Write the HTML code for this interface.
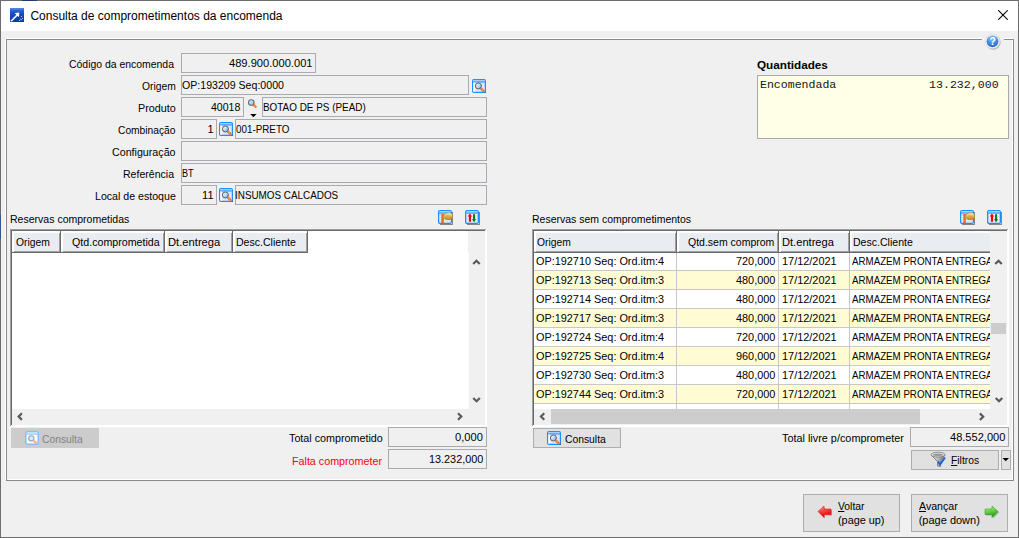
<!DOCTYPE html>
<html><head><meta charset="utf-8"><style>
html,body{margin:0;padding:0;}
body{width:1019px;height:538px;position:relative;overflow:hidden;background:#f0f0f0;font-family:"Liberation Sans",sans-serif;}
body div, body svg{position:absolute;}
.t{white-space:pre;}
u{text-decoration:underline;text-underline-offset:1px;}
</style></head><body>
<div style="left:1px;top:1px;width:1017px;height:30px;background:#ffffff;"></div>
<div style="left:0px;top:0px;width:1019px;height:1px;background:#6d6d6d;"></div>
<div style="left:22px;top:0px;width:15px;height:1px;background:#1f3d6b;"></div>
<div style="left:0px;top:0px;width:1px;height:538px;background:#6d6d6d;"></div>
<div style="left:0px;top:215px;width:1px;height:24px;background:#2c5b8c;"></div>
<div style="left:1018px;top:0px;width:1px;height:538px;background:#6d6d6d;"></div>
<div style="left:0px;top:537px;width:1019px;height:1px;background:#6d6d6d;"></div>
<svg style="left:10px;top:8px;" width="14" height="14" viewBox="0 0 14 14"><defs><linearGradient id="tg" x1="0" y1="0" x2="0" y2="1"><stop offset="0" stop-color="#3b78e0"/><stop offset="0.35" stop-color="#1850c0"/><stop offset="1" stop-color="#0a3a9a"/></linearGradient></defs>
<rect x="0" y="0" width="14" height="14" fill="url(#tg)"/>
<rect x="0" y="0" width="14" height="1.6" fill="#4a82e6"/>
<path d="M1 13.2 L7.6 6.6" stroke="#fff" stroke-width="1.5"/>
<path d="M4.6 4.9 L9.3 4.6 L9 9.3 Z" fill="#fff"/>
<path d="M11 8 L12 9 M10 11 L12 12 M9 12 L10 13 M12 10 L13 11" stroke="#9fc0f0" stroke-width="1"/></svg>
<div class="t" style="left:30.40px;top:10px;font-family:'Liberation Sans';font-size:12px;line-height:12px;font-weight:normal;color:#000;">Consulta de comprometimentos da encomenda</div>
<svg style="left:998px;top:10px;" width="10" height="10" viewBox="0 0 10 10"><path d="M0.3 0.3 L9.7 9.7 M9.7 0.3 L0.3 9.7" stroke="#000" stroke-width="1.05"/></svg>
<div style="left:5px;top:38px;width:1008px;height:1px;background:#ffffff;"></div>
<div style="left:5px;top:38px;width:1px;height:442px;background:#ffffff;"></div>
<div style="left:1012px;top:40px;width:1px;height:440px;background:#ffffff;"></div>
<div style="left:7px;top:479px;width:1006px;height:1px;background:#ffffff;"></div>
<div style="left:6px;top:39px;width:1008px;height:1px;background:#8a8a8a;"></div>
<div style="left:6px;top:39px;width:1px;height:442px;background:#8a8a8a;"></div>
<div style="left:1013px;top:39px;width:1px;height:442px;background:#8a8a8a;"></div>
<div style="left:6px;top:480px;width:1008px;height:1px;background:#8a8a8a;"></div>
<div style="left:982px;top:38px;width:22px;height:4px;background:#f0f0f0;"></div>
<svg style="left:983px;top:32px;" width="19" height="19" viewBox="0 0 19 19"><defs><radialGradient id="hg" cx="0.45" cy="0.25" r="0.85"><stop offset="0" stop-color="#9ccaf6"/><stop offset="0.45" stop-color="#4a94e4"/><stop offset="1" stop-color="#1c5ec4"/></radialGradient></defs>
<circle cx="10.3" cy="10.3" r="7.4" fill="#8a8a8a" opacity="0.55"/>
<circle cx="9.5" cy="9.3" r="7.3" fill="#f4f6fa" stroke="#c8ccd4" stroke-width="0.5"/>
<circle cx="9.5" cy="9.3" r="5.9" fill="url(#hg)"/>
<text x="9.6" y="13" font-family="Liberation Sans" font-weight="bold" font-size="10.5" fill="#fff" text-anchor="middle">?</text></svg>
<div class="t" style="left:69.40px;top:59px;font-family:'Liberation Sans';font-size:11px;line-height:11px;font-weight:normal;color:#000;transform:scaleX(0.9482);transform-origin:0 0;">Código da encomenda</div>
<div class="t" style="left:141.60px;top:81px;font-family:'Liberation Sans';font-size:11px;line-height:11px;font-weight:normal;color:#000;transform:scaleX(0.9360);transform-origin:0 0;">Origem</div>
<div class="t" style="left:137.60px;top:103px;font-family:'Liberation Sans';font-size:11px;line-height:11px;font-weight:normal;color:#000;transform:scaleX(0.9789);transform-origin:0 0;">Produto</div>
<div class="t" style="left:117.90px;top:125px;font-family:'Liberation Sans';font-size:11px;line-height:11px;font-weight:normal;color:#000;transform:scaleX(0.9296);transform-origin:0 0;">Combinação</div>
<div class="t" style="left:111.80px;top:147px;font-family:'Liberation Sans';font-size:11px;line-height:11px;font-weight:normal;color:#000;transform:scaleX(0.9707);transform-origin:0 0;">Configuração</div>
<div class="t" style="left:123.30px;top:169px;font-family:'Liberation Sans';font-size:11px;line-height:11px;font-weight:normal;color:#000;transform:scaleX(0.9597);transform-origin:0 0;">Referência</div>
<div class="t" style="left:94.50px;top:191px;font-family:'Liberation Sans';font-size:11px;line-height:11px;font-weight:normal;color:#000;transform:scaleX(0.9645);transform-origin:0 0;">Local de estoque</div>
<div style="left:181px;top:53px;width:133px;height:18px;border:1px solid #a8aab0;background:#f0f0f0;"></div>
<div class="t" style="left:228.90px;top:58px;font-family:'Liberation Sans';font-size:11px;line-height:11px;font-weight:normal;color:#000;transform:scaleX(1.0114);transform-origin:0 0;">489.900.000.001</div>
<div style="left:181px;top:75px;width:286px;height:18px;border:1px solid #a8aab0;background:#f0f0f0;"></div>
<div class="t" style="left:182.00px;top:80px;font-family:'Liberation Sans';font-size:11px;line-height:11px;font-weight:normal;color:#000;transform:scaleX(0.9632);transform-origin:0 0;">OP:193209 Seq:0000</div>
<svg style="left:472px;top:79px;opacity:1.0" width="14" height="14" viewBox="0 0 14 14"><defs><linearGradient id="mg" x1="0.2" y1="0.1" x2="0.9" y2="0.9"><stop offset="0" stop-color="#f0fbff"/><stop offset="0.55" stop-color="#a8dcf6"/><stop offset="1" stop-color="#5aaee0"/></linearGradient></defs>
<rect x="0.6" y="0.6" width="12.8" height="12.8" rx="1.3" fill="#e8e2f8" stroke="#1890ff" stroke-width="1.2"/>
<rect x="1.2" y="1.4" width="11.6" height="1" fill="#a6cdf7"/>
<rect x="1.2" y="2.4" width="11.6" height="1.1" fill="#1890ff"/>
<rect x="1.3" y="3.5" width="1.6" height="9.2" fill="#faf8ff"/>
<circle cx="6.4" cy="7.0" r="3.0" fill="url(#mg)" stroke="#5c6068" stroke-width="1.0"/>
<path d="M8.7 9.3 L11.9 12.4" stroke="#ff6a1a" stroke-width="2.3"/>
<path d="M9.5 10.1 L11.0 11.5" stroke="#ffd84a" stroke-width="0.8"/>
<rect x="12.6" y="12.6" width="1.4" height="1.4" fill="#303030" opacity="0.7"/></svg>
<div style="left:181px;top:97px;width:61px;height:18px;border:1px solid #a8aab0;background:#f0f0f0;"></div>
<div class="t" style="left:211.10px;top:102px;font-family:'Liberation Sans';font-size:11px;line-height:11px;font-weight:normal;color:#000;transform:scaleX(0.9583);transform-origin:0 0;">40018</div>
<svg style="left:246px;top:97px;" width="14" height="22" viewBox="0 0 14 22"><defs><linearGradient id="mg2" x1="0" y1="0" x2="1" y2="1"><stop offset="0" stop-color="#eafaff"/><stop offset="1" stop-color="#70bce8"/></linearGradient></defs>
<circle cx="5.3" cy="5.5" r="2.8" fill="url(#mg2)" stroke="#686c72" stroke-width="1.1"/>
<path d="M7.4 7.6 L10.3 10.5" stroke="#ff6a1a" stroke-width="2.2"/>
<path d="M8.2 8.4 L9.5 9.7" stroke="#ffd040" stroke-width="0.8"/>
<path d="M4.2 17 H10.6 L7.4 20.2 Z" fill="#000"/></svg>
<div style="left:262px;top:97px;width:223px;height:18px;border:1px solid #a8aab0;background:#f0f0f0;"></div>
<div class="t" style="left:262.80px;top:102px;font-family:'Liberation Sans';font-size:11px;line-height:11px;font-weight:normal;color:#000;transform:scaleX(0.9001);transform-origin:0 0;">BOTAO DE PS (PEAD)</div>
<div style="left:181px;top:119px;width:34px;height:18px;border:1px solid #a8aab0;background:#f0f0f0;"></div>
<div class="t" style="left:207.40px;top:124px;font-family:'Liberation Sans';font-size:11px;line-height:11px;font-weight:normal;color:#000;">1</div>
<svg style="left:219px;top:122px;opacity:1.0" width="14" height="14" viewBox="0 0 14 14"><defs><linearGradient id="mg" x1="0.2" y1="0.1" x2="0.9" y2="0.9"><stop offset="0" stop-color="#f0fbff"/><stop offset="0.55" stop-color="#a8dcf6"/><stop offset="1" stop-color="#5aaee0"/></linearGradient></defs>
<rect x="0.6" y="0.6" width="12.8" height="12.8" rx="1.3" fill="#e8e2f8" stroke="#1890ff" stroke-width="1.2"/>
<rect x="1.2" y="1.4" width="11.6" height="1" fill="#a6cdf7"/>
<rect x="1.2" y="2.4" width="11.6" height="1.1" fill="#1890ff"/>
<rect x="1.3" y="3.5" width="1.6" height="9.2" fill="#faf8ff"/>
<circle cx="6.4" cy="7.0" r="3.0" fill="url(#mg)" stroke="#5c6068" stroke-width="1.0"/>
<path d="M8.7 9.3 L11.9 12.4" stroke="#ff6a1a" stroke-width="2.3"/>
<path d="M9.5 10.1 L11.0 11.5" stroke="#ffd84a" stroke-width="0.8"/>
<rect x="12.6" y="12.6" width="1.4" height="1.4" fill="#303030" opacity="0.7"/></svg>
<div style="left:235px;top:119px;width:250px;height:18px;border:1px solid #a8aab0;background:#f0f0f0;"></div>
<div class="t" style="left:236.10px;top:124px;font-family:'Liberation Sans';font-size:11px;line-height:11px;font-weight:normal;color:#000;transform:scaleX(0.8944);transform-origin:0 0;">001-PRETO</div>
<div style="left:181px;top:141px;width:304px;height:18px;border:1px solid #a8aab0;background:#f0f0f0;"></div>
<div style="left:181px;top:163px;width:304px;height:18px;border:1px solid #a8aab0;background:#f0f0f0;"></div>
<div class="t" style="left:181.50px;top:168px;font-family:'Liberation Sans';font-size:11px;line-height:11px;font-weight:normal;color:#000;transform:scaleX(0.8300);transform-origin:0 0;">BT</div>
<div style="left:181px;top:185px;width:34px;height:18px;border:1px solid #a8aab0;background:#f0f0f0;"></div>
<div class="t" style="left:202.10px;top:190px;font-family:'Liberation Sans';font-size:11px;line-height:11px;font-weight:normal;color:#000;">11</div>
<svg style="left:219px;top:188px;opacity:1.0" width="14" height="14" viewBox="0 0 14 14"><defs><linearGradient id="mg" x1="0.2" y1="0.1" x2="0.9" y2="0.9"><stop offset="0" stop-color="#f0fbff"/><stop offset="0.55" stop-color="#a8dcf6"/><stop offset="1" stop-color="#5aaee0"/></linearGradient></defs>
<rect x="0.6" y="0.6" width="12.8" height="12.8" rx="1.3" fill="#e8e2f8" stroke="#1890ff" stroke-width="1.2"/>
<rect x="1.2" y="1.4" width="11.6" height="1" fill="#a6cdf7"/>
<rect x="1.2" y="2.4" width="11.6" height="1.1" fill="#1890ff"/>
<rect x="1.3" y="3.5" width="1.6" height="9.2" fill="#faf8ff"/>
<circle cx="6.4" cy="7.0" r="3.0" fill="url(#mg)" stroke="#5c6068" stroke-width="1.0"/>
<path d="M8.7 9.3 L11.9 12.4" stroke="#ff6a1a" stroke-width="2.3"/>
<path d="M9.5 10.1 L11.0 11.5" stroke="#ffd84a" stroke-width="0.8"/>
<rect x="12.6" y="12.6" width="1.4" height="1.4" fill="#303030" opacity="0.7"/></svg>
<div style="left:235px;top:185px;width:250px;height:18px;border:1px solid #a8aab0;background:#f0f0f0;"></div>
<div class="t" style="left:235.10px;top:190px;font-family:'Liberation Sans';font-size:11px;line-height:11px;font-weight:normal;color:#000;transform:scaleX(0.8981);transform-origin:0 0;">INSUMOS CALCADOS</div>
<div class="t" style="left:757.00px;top:60px;font-family:'Liberation Sans';font-size:11px;line-height:11px;font-weight:bold;color:#000;transform:scaleX(1.0631);transform-origin:0 0;">Quantidades</div>
<div style="left:757px;top:75px;width:250px;height:62px;border:1px solid #a8aab0;background:#fffee6;"></div>
<div class="t" style="left:759.70px;top:80px;font-family:'Liberation Mono';font-size:11px;line-height:11px;font-weight:normal;color:#141414;transform:scaleX(1.0505);transform-origin:0 0;">Encomendada</div>
<div class="t" style="left:928.50px;top:80px;font-family:'Liberation Mono';font-size:11px;line-height:11px;font-weight:normal;color:#141414;transform:scaleX(1.0549);transform-origin:0 0;">13.232,000</div>
<svg style="left:438px;top:210px;" width="15" height="15" viewBox="0 0 15 15"><path d="M14.5 2 V14.5 H2" fill="none" stroke="#000" stroke-width="1" opacity="0.45"/>
<rect x="0.65" y="0.65" width="12.7" height="12.7" rx="1.3" fill="#ebe8f8" stroke="#1890ff" stroke-width="1.3"/>
<rect x="1.3" y="1.5" width="11.4" height="1" fill="#a6cdf7"/>
<rect x="1.3" y="2.5" width="11.4" height="1.1" fill="#1890ff"/><defs><linearGradient id="hand" x1="0" y1="0" x2="0" y2="1"><stop offset="0" stop-color="#fff4c0"/><stop offset="0.5" stop-color="#e8b850"/><stop offset="1" stop-color="#b88420"/></linearGradient></defs>
<path d="M1.5 6.3 H12.5 M1.5 8.6 H12.5 M1.5 10.9 H12.5" stroke="#ffffff" stroke-width="0.9"/>
<path d="M1.5 5.2 H12.5 M1.5 7.5 H12.5 M1.5 9.8 H12.5 M1.5 12 H12.5" stroke="#c8c4ec" stroke-width="0.9"/>
<rect x="3.2" y="4" width="2.6" height="9" fill="#f5642a"/>
<path d="M3.6 4.5 V12.5" stroke="#ffc8a0" stroke-width="0.6" stroke-dasharray="1 1"/>
<path d="M5.2 6.2 C6.3 4.2 8.2 3 10.3 2.8 C12 2.7 13.6 3.2 14.4 4.2 L14.6 7.4 C13.6 9 11.6 9.8 9.6 9.6 C8.2 9.5 7 9 6.3 8.3 L4.3 7.6 Z" fill="url(#hand)" stroke="#a87a28" stroke-width="0.6"/>
<path d="M7.5 6.2 C9 5.6 11 5.8 12.5 6.6" fill="none" stroke="#b08030" stroke-width="0.5"/></svg>
<svg style="left:465px;top:210px;" width="15" height="15" viewBox="0 0 15 15"><path d="M14.5 2 V14.5 H2" fill="none" stroke="#000" stroke-width="1" opacity="0.45"/>
<rect x="0.65" y="0.65" width="12.7" height="12.7" rx="1.3" fill="#ebe8f8" stroke="#1890ff" stroke-width="1.3"/>
<rect x="1.3" y="1.5" width="11.4" height="1" fill="#a6cdf7"/>
<rect x="1.3" y="2.5" width="11.4" height="1.1" fill="#1890ff"/><path d="M2.7 6.5 L4.9 3.5 L7.1 6.5 H6 V11.8 H3.9 V6.5 Z" fill="#f40000"/>
<path d="M6.9 9.3 L9.05 12.3 L11.2 9.3 H10.1 V4.2 H8 V9.3 Z" fill="#0a7d16"/></svg>
<svg style="left:960px;top:210px;" width="15" height="15" viewBox="0 0 15 15"><path d="M14.5 2 V14.5 H2" fill="none" stroke="#000" stroke-width="1" opacity="0.45"/>
<rect x="0.65" y="0.65" width="12.7" height="12.7" rx="1.3" fill="#ebe8f8" stroke="#1890ff" stroke-width="1.3"/>
<rect x="1.3" y="1.5" width="11.4" height="1" fill="#a6cdf7"/>
<rect x="1.3" y="2.5" width="11.4" height="1.1" fill="#1890ff"/><defs><linearGradient id="hand" x1="0" y1="0" x2="0" y2="1"><stop offset="0" stop-color="#fff4c0"/><stop offset="0.5" stop-color="#e8b850"/><stop offset="1" stop-color="#b88420"/></linearGradient></defs>
<path d="M1.5 6.3 H12.5 M1.5 8.6 H12.5 M1.5 10.9 H12.5" stroke="#ffffff" stroke-width="0.9"/>
<path d="M1.5 5.2 H12.5 M1.5 7.5 H12.5 M1.5 9.8 H12.5 M1.5 12 H12.5" stroke="#c8c4ec" stroke-width="0.9"/>
<rect x="3.2" y="4" width="2.6" height="9" fill="#f5642a"/>
<path d="M3.6 4.5 V12.5" stroke="#ffc8a0" stroke-width="0.6" stroke-dasharray="1 1"/>
<path d="M5.2 6.2 C6.3 4.2 8.2 3 10.3 2.8 C12 2.7 13.6 3.2 14.4 4.2 L14.6 7.4 C13.6 9 11.6 9.8 9.6 9.6 C8.2 9.5 7 9 6.3 8.3 L4.3 7.6 Z" fill="url(#hand)" stroke="#a87a28" stroke-width="0.6"/>
<path d="M7.5 6.2 C9 5.6 11 5.8 12.5 6.6" fill="none" stroke="#b08030" stroke-width="0.5"/></svg>
<svg style="left:987px;top:210px;" width="15" height="15" viewBox="0 0 15 15"><path d="M14.5 2 V14.5 H2" fill="none" stroke="#000" stroke-width="1" opacity="0.45"/>
<rect x="0.65" y="0.65" width="12.7" height="12.7" rx="1.3" fill="#ebe8f8" stroke="#1890ff" stroke-width="1.3"/>
<rect x="1.3" y="1.5" width="11.4" height="1" fill="#a6cdf7"/>
<rect x="1.3" y="2.5" width="11.4" height="1.1" fill="#1890ff"/><path d="M2.7 6.5 L4.9 3.5 L7.1 6.5 H6 V11.8 H3.9 V6.5 Z" fill="#f40000"/>
<path d="M6.9 9.3 L9.05 12.3 L11.2 9.3 H10.1 V4.2 H8 V9.3 Z" fill="#0a7d16"/></svg>
<div class="t" style="left:9.70px;top:214px;font-family:'Liberation Sans';font-size:11px;line-height:11px;font-weight:normal;color:#000;transform:scaleX(0.9568);transform-origin:0 0;">Reservas comprometidas</div>
<div class="t" style="left:531.50px;top:214px;font-family:'Liberation Sans';font-size:11px;line-height:11px;font-weight:normal;color:#000;transform:scaleX(0.9529);transform-origin:0 0;">Reservas sem comprometimentos</div>
<div style="left:10px;top:229px;width:477px;height:198px;background:#ffffff;"></div>
<div style="left:10px;top:229px;width:476px;height:1px;background:#a0a0a0;"></div>
<div style="left:10px;top:229px;width:1px;height:197px;background:#a0a0a0;"></div>
<div style="left:11px;top:230px;width:474px;height:1px;background:#696969;"></div>
<div style="left:11px;top:230px;width:1px;height:195px;background:#696969;"></div>
<div style="left:12px;top:231px;width:49px;height:22px;background:#e9ecf0;"></div>
<div style="left:12px;top:231px;width:48px;height:2px;background:#ffffff;"></div>
<div style="left:12px;top:231px;width:2px;height:20px;background:#ffffff;"></div>
<div style="left:59px;top:233px;width:1px;height:19px;background:#a0a0a0;"></div>
<div style="left:14px;top:251px;width:46px;height:1px;background:#a0a0a0;"></div>
<div style="left:60px;top:231px;width:1px;height:22px;background:#696969;"></div>
<div style="left:12px;top:252px;width:49px;height:1px;background:#696969;"></div>
<div style="left:61px;top:231px;width:104px;height:22px;background:#e9ecf0;"></div>
<div style="left:61px;top:231px;width:103px;height:2px;background:#ffffff;"></div>
<div style="left:61px;top:231px;width:2px;height:20px;background:#ffffff;"></div>
<div style="left:163px;top:233px;width:1px;height:19px;background:#a0a0a0;"></div>
<div style="left:63px;top:251px;width:101px;height:1px;background:#a0a0a0;"></div>
<div style="left:164px;top:231px;width:1px;height:22px;background:#696969;"></div>
<div style="left:61px;top:252px;width:104px;height:1px;background:#696969;"></div>
<div style="left:165px;top:231px;width:68px;height:22px;background:#e9ecf0;"></div>
<div style="left:165px;top:231px;width:67px;height:2px;background:#ffffff;"></div>
<div style="left:165px;top:231px;width:2px;height:20px;background:#ffffff;"></div>
<div style="left:231px;top:233px;width:1px;height:19px;background:#a0a0a0;"></div>
<div style="left:167px;top:251px;width:65px;height:1px;background:#a0a0a0;"></div>
<div style="left:232px;top:231px;width:1px;height:22px;background:#696969;"></div>
<div style="left:165px;top:252px;width:68px;height:1px;background:#696969;"></div>
<div style="left:233px;top:231px;width:75px;height:22px;background:#e9ecf0;"></div>
<div style="left:233px;top:231px;width:74px;height:2px;background:#ffffff;"></div>
<div style="left:233px;top:231px;width:2px;height:20px;background:#ffffff;"></div>
<div style="left:306px;top:233px;width:1px;height:19px;background:#a0a0a0;"></div>
<div style="left:235px;top:251px;width:72px;height:1px;background:#a0a0a0;"></div>
<div style="left:307px;top:231px;width:1px;height:22px;background:#696969;"></div>
<div style="left:233px;top:252px;width:75px;height:1px;background:#696969;"></div>
<div class="t" style="left:15.50px;top:237px;font-family:'Liberation Sans';font-size:11px;line-height:11px;font-weight:normal;color:#000;transform:scaleX(0.9388);transform-origin:0 0;">Origem</div>
<div class="t" style="left:71.50px;top:237px;font-family:'Liberation Sans';font-size:11px;line-height:11px;font-weight:normal;color:#000;transform:scaleX(0.9687);transform-origin:0 0;">Qtd.comprometida</div>
<div class="t" style="left:168.30px;top:237px;font-family:'Liberation Sans';font-size:11px;line-height:11px;font-weight:normal;color:#000;transform:scaleX(1.0183);transform-origin:0 0;">Dt.entrega</div>
<div class="t" style="left:236.30px;top:237px;font-family:'Liberation Sans';font-size:11px;line-height:11px;font-weight:normal;color:#000;transform:scaleX(0.9592);transform-origin:0 0;">Desc.Cliente</div>
<div style="left:468px;top:231px;width:17px;height:194px;background:#f0f0f0;"></div>
<div style="left:468px;top:253px;width:1px;height:156px;background:#ffffff;"></div>
<div style="left:12px;top:409px;width:456px;height:16px;background:#f0f0f0;"></div>
<svg style="left:470px;top:256px;" width="12" height="12" viewBox="0 0 12 12"><path transform="translate(6.45 6.00)" d="M-3.3 2 L0 -1.3 L3.3 2" fill="none" stroke="#5a5a5a" stroke-width="2.2"/></svg>
<svg style="left:470px;top:394px;" width="12" height="12" viewBox="0 0 12 12"><path transform="translate(6.55 6.00)" d="M-3.3 -2 L0 1.3 L3.3 -2" fill="none" stroke="#5a5a5a" stroke-width="2.2"/></svg>
<svg style="left:13px;top:410px;" width="12" height="12" viewBox="0 0 12 12"><path transform="translate(6.90 6.60)" d="M2 -3.3 L-1.3 0 L2 3.3" fill="none" stroke="#5a5a5a" stroke-width="2.2"/></svg>
<svg style="left:454px;top:410px;" width="12" height="12" viewBox="0 0 12 12"><path transform="translate(6.00 6.50)" d="M-2 -3.3 L1.3 0 L-2 3.3" fill="none" stroke="#5a5a5a" stroke-width="2.2"/></svg>
<div style="left:532px;top:229px;width:477px;height:198px;background:#ffffff;"></div>
<div style="left:532px;top:229px;width:476px;height:1px;background:#a0a0a0;"></div>
<div style="left:532px;top:229px;width:1px;height:197px;background:#a0a0a0;"></div>
<div style="left:533px;top:230px;width:474px;height:1px;background:#696969;"></div>
<div style="left:533px;top:230px;width:1px;height:195px;background:#696969;"></div>
<div style="left:534px;top:231px;width:143px;height:22px;background:#e9ecf0;"></div>
<div style="left:534px;top:231px;width:142px;height:2px;background:#ffffff;"></div>
<div style="left:534px;top:231px;width:2px;height:20px;background:#ffffff;"></div>
<div style="left:675px;top:233px;width:1px;height:19px;background:#a0a0a0;"></div>
<div style="left:536px;top:251px;width:140px;height:1px;background:#a0a0a0;"></div>
<div style="left:676px;top:231px;width:1px;height:22px;background:#696969;"></div>
<div style="left:534px;top:252px;width:143px;height:1px;background:#696969;"></div>
<div style="left:677px;top:231px;width:102px;height:22px;background:#e9ecf0;"></div>
<div style="left:677px;top:231px;width:101px;height:2px;background:#ffffff;"></div>
<div style="left:677px;top:231px;width:2px;height:20px;background:#ffffff;"></div>
<div style="left:777px;top:233px;width:1px;height:19px;background:#a0a0a0;"></div>
<div style="left:679px;top:251px;width:99px;height:1px;background:#a0a0a0;"></div>
<div style="left:778px;top:231px;width:1px;height:22px;background:#696969;"></div>
<div style="left:677px;top:252px;width:102px;height:1px;background:#696969;"></div>
<div style="left:779px;top:231px;width:71px;height:22px;background:#e9ecf0;"></div>
<div style="left:779px;top:231px;width:70px;height:2px;background:#ffffff;"></div>
<div style="left:779px;top:231px;width:2px;height:20px;background:#ffffff;"></div>
<div style="left:848px;top:233px;width:1px;height:19px;background:#a0a0a0;"></div>
<div style="left:781px;top:251px;width:68px;height:1px;background:#a0a0a0;"></div>
<div style="left:849px;top:231px;width:1px;height:22px;background:#696969;"></div>
<div style="left:779px;top:252px;width:71px;height:1px;background:#696969;"></div>
<div style="left:850px;top:231px;width:140px;height:22px;background:#e9ecf0;"></div>
<div style="left:850px;top:231px;width:140px;height:2px;background:#ffffff;"></div>
<div style="left:850px;top:231px;width:2px;height:20px;background:#ffffff;"></div>
<div style="left:850px;top:251px;width:140px;height:1px;background:#a0a0a0;"></div>
<div style="left:850px;top:252px;width:140px;height:1px;background:#696969;"></div>
<div class="t" style="left:537.40px;top:237px;font-family:'Liberation Sans';font-size:11px;line-height:11px;font-weight:normal;color:#000;transform:scaleX(0.9360);transform-origin:0 0;">Origem</div>
<div class="t" style="left:687.60px;top:237px;font-family:'Liberation Sans';font-size:11px;line-height:11px;font-weight:normal;color:#000;transform:scaleX(0.9546);transform-origin:0 0;">Qtd.sem comprom</div>
<div class="t" style="left:782.00px;top:237px;font-family:'Liberation Sans';font-size:11px;line-height:11px;font-weight:normal;color:#000;transform:scaleX(1.0106);transform-origin:0 0;">Dt.entrega</div>
<div class="t" style="left:853.00px;top:237px;font-family:'Liberation Sans';font-size:11px;line-height:11px;font-weight:normal;color:#000;transform:scaleX(0.9592);transform-origin:0 0;">Desc.Cliente</div>
<div style="left:534px;top:270px;width:456px;height:1px;background:#c8c8c8;"></div>
<div class="t" style="left:536.00px;top:256px;font-family:'Liberation Sans';font-size:11px;line-height:11px;font-weight:normal;color:#000;transform:scaleX(0.9884);transform-origin:0 0;">OP:192710 Seq: Ord.itm:4</div>
<div class="t" style="left:736.00px;top:256px;font-family:'Liberation Sans';font-size:11px;line-height:11px;font-weight:normal;color:#000;transform:scaleX(0.9888);transform-origin:0 0;">720,000</div>
<div class="t" style="left:782.00px;top:256px;font-family:'Liberation Sans';font-size:11px;line-height:11px;font-weight:normal;color:#000;transform:scaleX(0.9921);transform-origin:0 0;">17/12/2021</div>
<div style="left:850px;top:252px;width:140px;height:18px;overflow:hidden"><div style="left:-850px;top:-252px"><div class="t" style="left:852.00px;top:256px;font-family:'Liberation Sans';font-size:11px;line-height:11px;font-weight:normal;color:#000;transform:scaleX(0.8850);transform-origin:0 0;">ARMAZEM PRONTA ENTREGA</div></div></div>
<div style="left:534px;top:271px;width:456px;height:18px;background:#fffcd4;"></div>
<div style="left:534px;top:289px;width:456px;height:1px;background:#c8c8c8;"></div>
<div class="t" style="left:536.00px;top:275px;font-family:'Liberation Sans';font-size:11px;line-height:11px;font-weight:normal;color:#000;transform:scaleX(0.9884);transform-origin:0 0;">OP:192713 Seq: Ord.itm:3</div>
<div class="t" style="left:736.00px;top:275px;font-family:'Liberation Sans';font-size:11px;line-height:11px;font-weight:normal;color:#000;transform:scaleX(0.9888);transform-origin:0 0;">480,000</div>
<div class="t" style="left:782.00px;top:275px;font-family:'Liberation Sans';font-size:11px;line-height:11px;font-weight:normal;color:#000;transform:scaleX(0.9921);transform-origin:0 0;">17/12/2021</div>
<div style="left:850px;top:271px;width:140px;height:18px;overflow:hidden"><div style="left:-850px;top:-271px"><div class="t" style="left:852.00px;top:275px;font-family:'Liberation Sans';font-size:11px;line-height:11px;font-weight:normal;color:#000;transform:scaleX(0.8850);transform-origin:0 0;">ARMAZEM PRONTA ENTREGA</div></div></div>
<div style="left:534px;top:308px;width:456px;height:1px;background:#c8c8c8;"></div>
<div class="t" style="left:536.00px;top:294px;font-family:'Liberation Sans';font-size:11px;line-height:11px;font-weight:normal;color:#000;transform:scaleX(0.9884);transform-origin:0 0;">OP:192714 Seq: Ord.itm:3</div>
<div class="t" style="left:736.00px;top:294px;font-family:'Liberation Sans';font-size:11px;line-height:11px;font-weight:normal;color:#000;transform:scaleX(0.9888);transform-origin:0 0;">480,000</div>
<div class="t" style="left:782.00px;top:294px;font-family:'Liberation Sans';font-size:11px;line-height:11px;font-weight:normal;color:#000;transform:scaleX(0.9921);transform-origin:0 0;">17/12/2021</div>
<div style="left:850px;top:290px;width:140px;height:18px;overflow:hidden"><div style="left:-850px;top:-290px"><div class="t" style="left:852.00px;top:294px;font-family:'Liberation Sans';font-size:11px;line-height:11px;font-weight:normal;color:#000;transform:scaleX(0.8850);transform-origin:0 0;">ARMAZEM PRONTA ENTREGA</div></div></div>
<div style="left:534px;top:309px;width:456px;height:18px;background:#fffcd4;"></div>
<div style="left:534px;top:327px;width:456px;height:1px;background:#c8c8c8;"></div>
<div class="t" style="left:536.00px;top:313px;font-family:'Liberation Sans';font-size:11px;line-height:11px;font-weight:normal;color:#000;transform:scaleX(0.9884);transform-origin:0 0;">OP:192717 Seq: Ord.itm:3</div>
<div class="t" style="left:736.00px;top:313px;font-family:'Liberation Sans';font-size:11px;line-height:11px;font-weight:normal;color:#000;transform:scaleX(0.9888);transform-origin:0 0;">480,000</div>
<div class="t" style="left:782.00px;top:313px;font-family:'Liberation Sans';font-size:11px;line-height:11px;font-weight:normal;color:#000;transform:scaleX(0.9921);transform-origin:0 0;">17/12/2021</div>
<div style="left:850px;top:309px;width:140px;height:18px;overflow:hidden"><div style="left:-850px;top:-309px"><div class="t" style="left:852.00px;top:313px;font-family:'Liberation Sans';font-size:11px;line-height:11px;font-weight:normal;color:#000;transform:scaleX(0.8850);transform-origin:0 0;">ARMAZEM PRONTA ENTREGA</div></div></div>
<div style="left:534px;top:346px;width:456px;height:1px;background:#c8c8c8;"></div>
<div class="t" style="left:536.00px;top:332px;font-family:'Liberation Sans';font-size:11px;line-height:11px;font-weight:normal;color:#000;transform:scaleX(0.9884);transform-origin:0 0;">OP:192724 Seq: Ord.itm:4</div>
<div class="t" style="left:736.00px;top:332px;font-family:'Liberation Sans';font-size:11px;line-height:11px;font-weight:normal;color:#000;transform:scaleX(0.9888);transform-origin:0 0;">720,000</div>
<div class="t" style="left:782.00px;top:332px;font-family:'Liberation Sans';font-size:11px;line-height:11px;font-weight:normal;color:#000;transform:scaleX(0.9921);transform-origin:0 0;">17/12/2021</div>
<div style="left:850px;top:328px;width:140px;height:18px;overflow:hidden"><div style="left:-850px;top:-328px"><div class="t" style="left:852.00px;top:332px;font-family:'Liberation Sans';font-size:11px;line-height:11px;font-weight:normal;color:#000;transform:scaleX(0.8850);transform-origin:0 0;">ARMAZEM PRONTA ENTREGA</div></div></div>
<div style="left:534px;top:347px;width:456px;height:18px;background:#fffcd4;"></div>
<div style="left:534px;top:365px;width:456px;height:1px;background:#c8c8c8;"></div>
<div class="t" style="left:536.00px;top:351px;font-family:'Liberation Sans';font-size:11px;line-height:11px;font-weight:normal;color:#000;transform:scaleX(0.9884);transform-origin:0 0;">OP:192725 Seq: Ord.itm:4</div>
<div class="t" style="left:736.00px;top:351px;font-family:'Liberation Sans';font-size:11px;line-height:11px;font-weight:normal;color:#000;transform:scaleX(0.9888);transform-origin:0 0;">960,000</div>
<div class="t" style="left:782.00px;top:351px;font-family:'Liberation Sans';font-size:11px;line-height:11px;font-weight:normal;color:#000;transform:scaleX(0.9921);transform-origin:0 0;">17/12/2021</div>
<div style="left:850px;top:347px;width:140px;height:18px;overflow:hidden"><div style="left:-850px;top:-347px"><div class="t" style="left:852.00px;top:351px;font-family:'Liberation Sans';font-size:11px;line-height:11px;font-weight:normal;color:#000;transform:scaleX(0.8850);transform-origin:0 0;">ARMAZEM PRONTA ENTREGA</div></div></div>
<div style="left:534px;top:384px;width:456px;height:1px;background:#c8c8c8;"></div>
<div class="t" style="left:536.00px;top:370px;font-family:'Liberation Sans';font-size:11px;line-height:11px;font-weight:normal;color:#000;transform:scaleX(0.9884);transform-origin:0 0;">OP:192730 Seq: Ord.itm:3</div>
<div class="t" style="left:736.00px;top:370px;font-family:'Liberation Sans';font-size:11px;line-height:11px;font-weight:normal;color:#000;transform:scaleX(0.9888);transform-origin:0 0;">480,000</div>
<div class="t" style="left:782.00px;top:370px;font-family:'Liberation Sans';font-size:11px;line-height:11px;font-weight:normal;color:#000;transform:scaleX(0.9921);transform-origin:0 0;">17/12/2021</div>
<div style="left:850px;top:366px;width:140px;height:18px;overflow:hidden"><div style="left:-850px;top:-366px"><div class="t" style="left:852.00px;top:370px;font-family:'Liberation Sans';font-size:11px;line-height:11px;font-weight:normal;color:#000;transform:scaleX(0.8850);transform-origin:0 0;">ARMAZEM PRONTA ENTREGA</div></div></div>
<div style="left:534px;top:385px;width:456px;height:18px;background:#fffcd4;"></div>
<div style="left:534px;top:403px;width:456px;height:1px;background:#c8c8c8;"></div>
<div class="t" style="left:536.00px;top:389px;font-family:'Liberation Sans';font-size:11px;line-height:11px;font-weight:normal;color:#000;transform:scaleX(0.9884);transform-origin:0 0;">OP:192744 Seq: Ord.itm:3</div>
<div class="t" style="left:736.00px;top:389px;font-family:'Liberation Sans';font-size:11px;line-height:11px;font-weight:normal;color:#000;transform:scaleX(0.9888);transform-origin:0 0;">720,000</div>
<div class="t" style="left:782.00px;top:389px;font-family:'Liberation Sans';font-size:11px;line-height:11px;font-weight:normal;color:#000;transform:scaleX(0.9921);transform-origin:0 0;">17/12/2021</div>
<div style="left:850px;top:385px;width:140px;height:18px;overflow:hidden"><div style="left:-850px;top:-385px"><div class="t" style="left:852.00px;top:389px;font-family:'Liberation Sans';font-size:11px;line-height:11px;font-weight:normal;color:#000;transform:scaleX(0.8850);transform-origin:0 0;">ARMAZEM PRONTA ENTREGA</div></div></div>
<div style="left:676px;top:253px;width:1px;height:156px;background:#c8c8c8;"></div>
<div style="left:778px;top:253px;width:1px;height:156px;background:#c8c8c8;"></div>
<div style="left:849px;top:253px;width:1px;height:156px;background:#c8c8c8;"></div>
<div style="left:990px;top:231px;width:17px;height:194px;background:#f0f0f0;"></div>
<div style="left:991px;top:323px;width:15px;height:11px;background:#cdcdcd;"></div>
<div style="left:534px;top:409px;width:456px;height:16px;background:#f0f0f0;"></div>
<div style="left:551px;top:409px;width:369px;height:15px;background:#cdcdcd;"></div>
<svg style="left:992px;top:256px;" width="12" height="12" viewBox="0 0 12 12"><path transform="translate(6.50 6.00)" d="M-3.3 2 L0 -1.3 L3.3 2" fill="none" stroke="#5a5a5a" stroke-width="2.2"/></svg>
<svg style="left:993px;top:394px;" width="12" height="12" viewBox="0 0 12 12"><path transform="translate(6.00 6.00)" d="M-3.3 -2 L0 1.3 L3.3 -2" fill="none" stroke="#5a5a5a" stroke-width="2.2"/></svg>
<svg style="left:536px;top:410px;" width="12" height="12" viewBox="0 0 12 12"><path transform="translate(6.25 6.50)" d="M2 -3.3 L-1.3 0 L2 3.3" fill="none" stroke="#5a5a5a" stroke-width="2.2"/></svg>
<svg style="left:975px;top:410px;" width="12" height="12" viewBox="0 0 12 12"><path transform="translate(6.90 6.70)" d="M-2 -3.3 L1.3 0 L-2 3.3" fill="none" stroke="#5a5a5a" stroke-width="2.2"/></svg>
<div style="left:11px;top:428px;width:88px;height:20px;background:#cccccc;"></div>
<svg style="left:25px;top:431px;" width="14" height="14" viewBox="0 0 14 14"><rect x="0.75" y="0.75" width="12.5" height="12.5" rx="1.6" fill="#fbfbff" stroke="#7cc0ff" stroke-width="1.5"/>
<rect x="1.4" y="1.6" width="11.2" height="1" fill="#d4e6fb"/><rect x="1.4" y="2.6" width="11.2" height="1" fill="#7cc0ff"/>
<circle cx="6.3" cy="7.3" r="2.6" fill="#d6eefa" stroke="#a0a4aa" stroke-width="1.1"/>
<path d="M8.6 9.6 L11.6 12.4" stroke="#ffb27a" stroke-width="2.2"/></svg>
<div class="t" style="left:42.30px;top:434px;font-family:'Liberation Sans';font-size:11px;line-height:11px;font-weight:normal;color:#838383;transform:scaleX(0.9369);transform-origin:0 0;">Consulta</div>
<div class="t" style="left:288.50px;top:433px;font-family:'Liberation Sans';font-size:11px;line-height:11px;font-weight:normal;color:#000;transform:scaleX(0.9774);transform-origin:0 0;">Total comprometido</div>
<div class="t" style="left:291.90px;top:456px;font-family:'Liberation Sans';font-size:11px;line-height:11px;font-weight:normal;color:#ff0000;transform:scaleX(0.9747);transform-origin:0 0;">Falta comprometer</div>
<div style="left:388px;top:427px;width:97px;height:18px;border:1px solid #a8aab0;background:#f0f0f0;"></div>
<div class="t" style="left:455.40px;top:432px;font-family:'Liberation Sans';font-size:11px;line-height:11px;font-weight:normal;color:#000;transform:scaleX(1.0106);transform-origin:0 0;">0,000</div>
<div style="left:388px;top:449px;width:97px;height:18px;border:1px solid #a8aab0;background:#f0f0f0;"></div>
<div class="t" style="left:428.90px;top:454px;font-family:'Liberation Sans';font-size:11px;line-height:11px;font-weight:normal;color:#000;transform:scaleX(0.9866);transform-origin:0 0;">13.232,000</div>
<div style="left:533px;top:428px;width:86px;height:18px;border:1px solid #adadad;background:#e1e1e1;"></div>
<svg style="left:547px;top:431px;opacity:1.0" width="14" height="14" viewBox="0 0 14 14"><defs><linearGradient id="mg" x1="0.2" y1="0.1" x2="0.9" y2="0.9"><stop offset="0" stop-color="#f0fbff"/><stop offset="0.55" stop-color="#a8dcf6"/><stop offset="1" stop-color="#5aaee0"/></linearGradient></defs>
<rect x="0.6" y="0.6" width="12.8" height="12.8" rx="1.3" fill="#e8e2f8" stroke="#1890ff" stroke-width="1.2"/>
<rect x="1.2" y="1.4" width="11.6" height="1" fill="#a6cdf7"/>
<rect x="1.2" y="2.4" width="11.6" height="1.1" fill="#1890ff"/>
<rect x="1.3" y="3.5" width="1.6" height="9.2" fill="#faf8ff"/>
<circle cx="6.4" cy="7.0" r="3.0" fill="url(#mg)" stroke="#5c6068" stroke-width="1.0"/>
<path d="M8.7 9.3 L11.9 12.4" stroke="#ff6a1a" stroke-width="2.3"/>
<path d="M9.5 10.1 L11.0 11.5" stroke="#ffd84a" stroke-width="0.8"/>
<rect x="12.6" y="12.6" width="1.4" height="1.4" fill="#303030" opacity="0.7"/></svg>
<div class="t" style="left:564.90px;top:434px;font-family:'Liberation Sans';font-size:11px;line-height:11px;font-weight:normal;color:#000;transform:scaleX(0.9391);transform-origin:0 0;">Consulta</div>
<div class="t" style="left:781.60px;top:433px;font-family:'Liberation Sans';font-size:11px;line-height:11px;font-weight:normal;color:#000;transform:scaleX(0.9869);transform-origin:0 0;">Total livre p/comprometer</div>
<div style="left:910px;top:427px;width:97px;height:18px;border:1px solid #a8aab0;background:#f0f0f0;"></div>
<div class="t" style="left:950.00px;top:432px;font-family:'Liberation Sans';font-size:11px;line-height:11px;font-weight:normal;color:#000;transform:scaleX(1.0048);transform-origin:0 0;">48.552,000</div>
<div style="left:911px;top:450px;width:86px;height:18px;border:1px solid #adadad;background:#e1e1e1;"></div>
<svg style="left:930px;top:451px;" width="18" height="17" viewBox="0 0 18 17"><defs><linearGradient id="fun" x1="0" y1="0" x2="1" y2="0"><stop offset="0" stop-color="#f4f4f4"/><stop offset="0.5" stop-color="#b8b8b8"/><stop offset="1" stop-color="#707070"/></linearGradient></defs>
<path d="M1 4 L15 4 L10.5 10.5 L10.5 15.5 L7.5 15 L7.5 10.5 Z" fill="url(#fun)" stroke="#6a6a6a" stroke-width="0.7"/>
<ellipse cx="8" cy="3.6" rx="7" ry="2.4" fill="#e4e4e4" stroke="#707070" stroke-width="0.7"/>
<ellipse cx="8" cy="3.8" rx="5" ry="1.4" fill="#9a9a9a"/>
<path d="M8 10.5 L10 13.5 L15 6.5" fill="none" stroke="#1a66e0" stroke-width="2.1"/></svg>
<div class="t" style="left:950.80px;top:455px;font-family:'Liberation Sans';font-size:11px;line-height:11px;font-weight:normal;color:#000;transform:scaleX(0.9361);transform-origin:0 0;"><u>F</u>iltros</div>
<div style="left:1001px;top:450px;width:8px;height:18px;border:1px solid #adadad;background:#e1e1e1;"></div>
<svg style="left:1002px;top:457px;" width="8" height="6" viewBox="0 0 8 6"><path d="M0.5 1 H7 L3.75 4.3 Z" fill="#000"/></svg>
<div style="left:803px;top:494px;width:95px;height:36px;border:1px solid #adadad;background:#e1e1e1;"></div>
<svg style="left:817px;top:505px;" width="16" height="15" viewBox="0 0 16 15"><defs><linearGradient id="rg" x1="0" y1="0" x2="0.3" y2="1"><stop offset="0" stop-color="#ffb0b0"/><stop offset="0.45" stop-color="#ff4848"/><stop offset="1" stop-color="#d80000"/></linearGradient></defs>
<path d="M2 7.5 L8 2 V5 H15 V10.5 H8 V13.5 Z" fill="#600000" opacity="0.3"/>
<path d="M1 6.5 L7 1 V4 H14 V9.5 H7 V12.5 Z" fill="url(#rg)" stroke="#e01818" stroke-width="0.6"/></svg>
<div class="t" style="left:838.00px;top:501px;font-family:'Liberation Sans';font-size:11px;line-height:11px;font-weight:normal;color:#000;transform:scaleX(0.9415);transform-origin:0 0;"><u>V</u>oltar</div>
<div class="t" style="left:838.00px;top:515px;font-family:'Liberation Sans';font-size:11px;line-height:11px;font-weight:normal;color:#000;transform:scaleX(0.9865);transform-origin:0 0;">(page up)</div>
<div style="left:911px;top:494px;width:95px;height:36px;border:1px solid #adadad;background:#e1e1e1;"></div>
<div class="t" style="left:918.70px;top:501px;font-family:'Liberation Sans';font-size:11px;line-height:11px;font-weight:normal;color:#000;transform:scaleX(0.9656);transform-origin:0 0;"><u>A</u>vançar</div>
<div class="t" style="left:918.70px;top:515px;font-family:'Liberation Sans';font-size:11px;line-height:11px;font-weight:normal;color:#000;">(page down)</div>
<svg style="left:984px;top:505px;" width="16" height="15" viewBox="0 0 16 15"><defs><linearGradient id="gg" x1="0" y1="0" x2="0.3" y2="1"><stop offset="0" stop-color="#c8ffb0"/><stop offset="0.45" stop-color="#70d850"/><stop offset="1" stop-color="#2a9a18"/></linearGradient></defs>
<path d="M15 7.5 L9 2 V5 H2 V10.5 H9 V13.5 Z" fill="#104000" opacity="0.3"/>
<path d="M14 6.5 L8 1 V4 H1 V9.5 H8 V12.5 Z" fill="url(#gg)" stroke="#38a020" stroke-width="0.6"/></svg>
</body></html>
